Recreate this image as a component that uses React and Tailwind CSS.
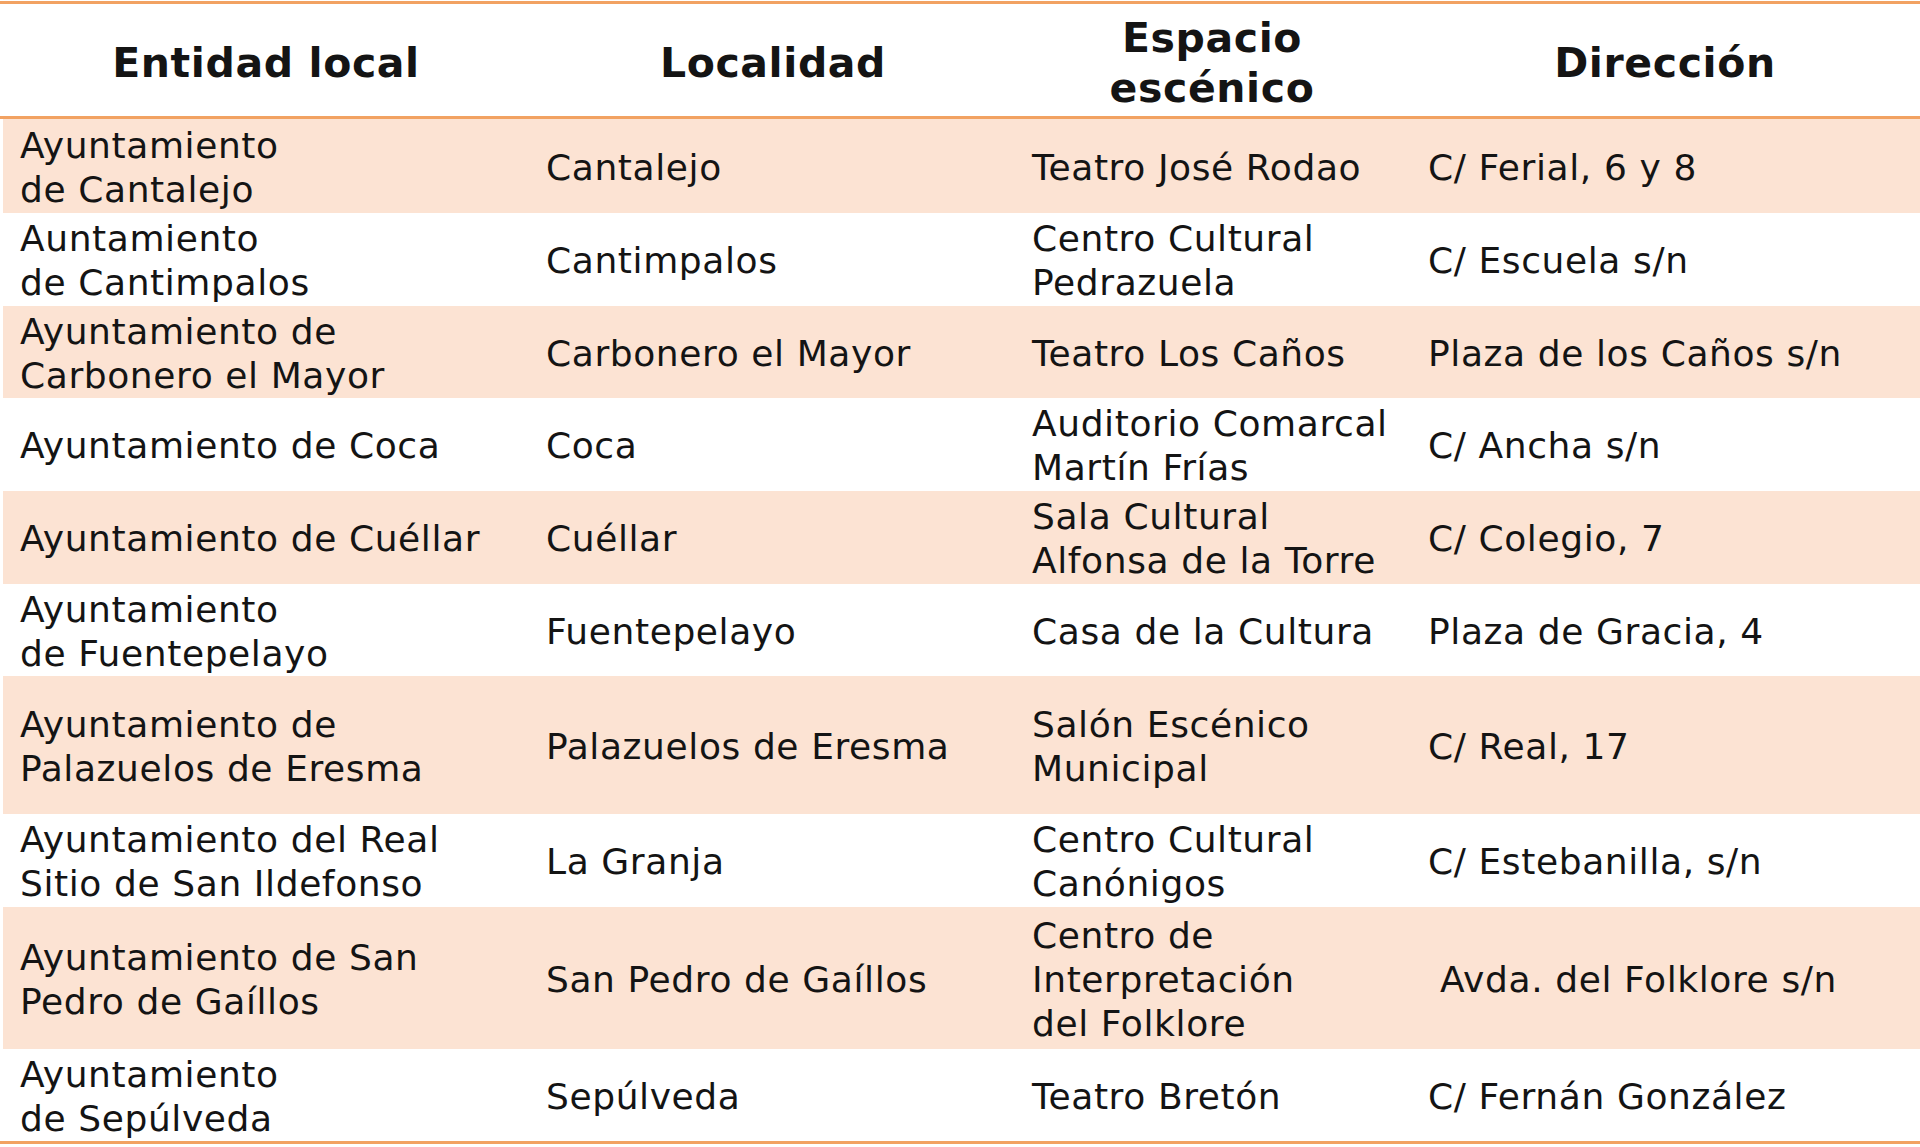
import React from "react";

const rows = [
  { h: "h-[94px]", shade: true, entidad: ["Ayuntamiento", "de Cantalejo"], localidad: "Cantalejo", espacio: ["Teatro José Rodao"], direccion: "C/ Ferial, 6 y 8" },
  { h: "h-[93px]", shade: false, entidad: ["Auntamiento", "de Cantimpalos"], localidad: "Cantimpalos", espacio: ["Centro Cultural", "Pedrazuela"], direccion: "C/ Escuela s/n" },
  { h: "h-[92px]", shade: true, entidad: ["Ayuntamiento de", "Carbonero el Mayor"], localidad: "Carbonero el Mayor", espacio: ["Teatro Los Caños"], direccion: "Plaza de los Caños s/n" },
  { h: "h-[93px]", shade: false, entidad: ["Ayuntamiento de Coca"], localidad: "Coca", espacio: ["Auditorio Comarcal", "Martín Frías"], direccion: "C/ Ancha s/n" },
  { h: "h-[93px]", shade: true, entidad: ["Ayuntamiento de Cuéllar"], localidad: "Cuéllar", espacio: ["Sala Cultural", "Alfonsa de la Torre"], direccion: "C/ Colegio, 7" },
  { h: "h-[92px]", shade: false, entidad: ["Ayuntamiento", "de Fuentepelayo"], localidad: "Fuentepelayo", espacio: ["Casa de la Cultura"], direccion: "Plaza de Gracia, 4" },
  { h: "h-[138px]", shade: true, entidad: ["Ayuntamiento de", "Palazuelos de Eresma"], localidad: "Palazuelos de Eresma", espacio: ["Salón Escénico", "Municipal"], direccion: "C/ Real, 17" },
  { h: "h-[93px]", shade: false, entidad: ["Ayuntamiento del Real", "Sitio de San Ildefonso"], localidad: "La Granja", espacio: ["Centro Cultural", "Canónigos"], direccion: "C/ Estebanilla, s/n" },
  { h: "h-[142px]", shade: true, entidad: ["Ayuntamiento de San", "Pedro de Gaíllos"], localidad: "San Pedro de Gaíllos", espacio: ["Centro de", "Interpretación", "del Folklore"], direccion: "Avda. del Folklore s/n", indent: true },
  { h: "h-[92px]", shade: false, entidad: ["Ayuntamiento", "de Sepúlveda"], localidad: "Sepúlveda", espacio: ["Teatro Bretón"], direccion: "C/ Fernán González" },
];

const Lines = ({ lines }) => (
  <div className="flex flex-col">
    {lines.map((l) => (
      <span key={l} className="whitespace-nowrap">{l}</span>
    ))}
  </div>
);

export default function App() {
  return (
    <div className="w-[1920px] h-[1147px] bg-white pt-[1px] text-[#141414] font-['DejaVu_Sans',Verdana,sans-serif]">
      <div className="border-t-[3px] border-b-[3px] border-[#f2a262]">
        {/* cabecera */}
        <div className="flex h-[112px] pt-[5px] items-center text-center font-bold text-[41px] leading-[50px] tracking-[0.6px]">
          <div className="w-[532px]">Entidad local</div>
          <div className="w-[482px]">Localidad</div>
          <div className="w-[396px]">Espacio<br />escénico</div>
          <div className="w-[510px]">Dirección</div>
        </div>
        <div className="border-t-[3px] border-[#f2a262]">
          {rows.map((r) => (
            <div
              key={r.localidad}
              className={`flex items-center ml-[3px] pt-[3px] text-[36px] leading-[44px] tracking-[0.6px] ${r.h} ${r.shade ? "bg-[#fce3d3]" : "bg-white"}`}
            >
              <div className="w-[529px] pl-[17px]"><Lines lines={r.entidad} /></div>
              <div className="w-[482px] pl-[14px] whitespace-nowrap">{r.localidad}</div>
              <div className="w-[396px] pl-[18px]"><Lines lines={r.espacio} /></div>
              <div className={`w-[510px] whitespace-nowrap ${r.indent ? "pl-[30px]" : "pl-[18px]"}`}>{r.direccion}</div>
            </div>
          ))}
        </div>
      </div>
    </div>
  );
}
